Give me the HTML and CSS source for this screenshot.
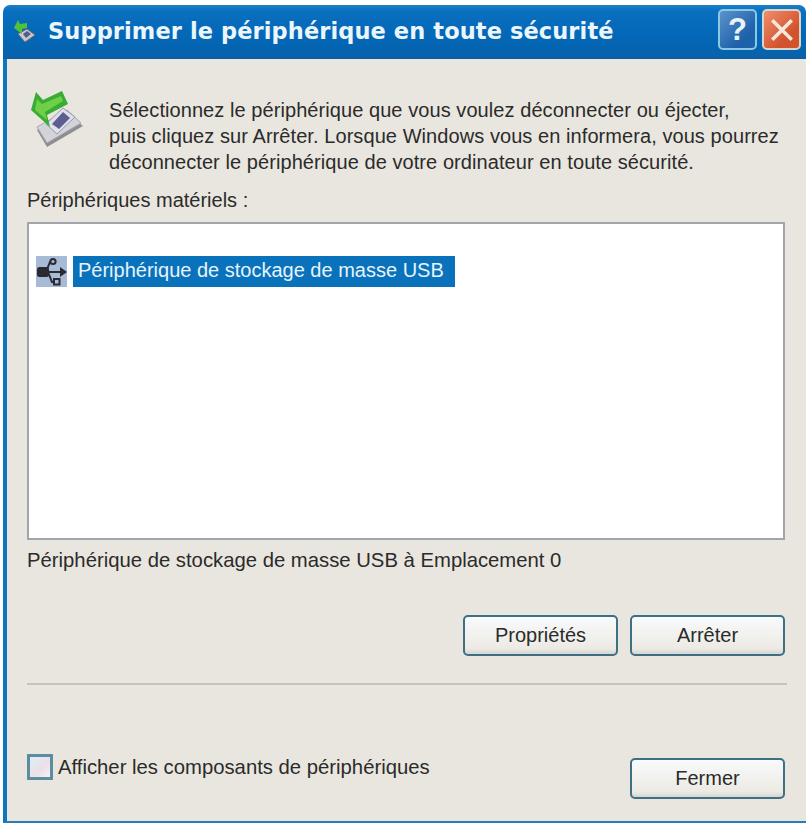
FILE: index.html
```html
<!DOCTYPE html>
<html lang="fr">
<head>
<meta charset="utf-8">
<title>Supprimer le périphérique en toute sécurité</title>
<link rel="stylesheet" href="styles.css">
</head>
<body>
<div class="window">
  <header class="titlebar">
    <svg class="title-icon" viewBox="0 0 24 24" width="24" height="24">
      <path d="M6 15 L15 10 L23 16 L13 23 Z" fill="#c9c9d2" stroke="#77706a"/>
      <path d="M11 15 L15 12 L19 15 L14 19 Z" fill="#5a5a8c"/>
      <path d="M2 9 L6 1 L8 5 L15 4 L15 9 L10 10 L10 15 Z" fill="#4fc23a"/>
    </svg>
    <h1 class="title">Supprimer le périphérique en toute sécurité</h1>
    <div class="caption-btns">
      <div class="cap-btn help">?</div>
      <div class="cap-btn close">
        <svg viewBox="0 0 24 24" width="26" height="26"><path d="M3 3 L21 21 M21 3 L3 21" stroke="#f6e8de" stroke-width="3.2" fill="none"/></svg>
      </div>
    </div>
  </header>
  <main class="body">
    <section class="intro">
      <svg class="intro-icon" viewBox="30 88 54 60" width="54" height="60">
        <path d="M37 130 L67 113 L83 126 L47 147 Z" fill="#8e8e92"/>
        <path d="M37 127 L67 110 L81 123 L47 143 Z" fill="#d3d4da" stroke="#a8a8ac"/>
        <path d="M46 124 L63 108 L75 117 L57 134 Z" fill="#dfe0e8" stroke="#9a9aa4"/>
        <path d="M52 124 L63 112 L70 118 L59 129 Z" fill="#5d5d94"/>
        <path d="M36 92 L31 110 L50 127 L47 115 L68 104 L62 91 L43 100 Z" fill="#38ac33"/>
        <path d="M37 99 L35 110 L47 120 L45 112 L63 101 L61 96 L42 104 Z" fill="#6fcf48"/>
      </svg>
      <p class="intro-text">Sélectionnez le périphérique que vous voulez déconnecter ou éjecter,<br>puis cliquez sur Arrêter. Lorsque Windows vous en informera, vous pourrez<br>déconnecter le périphérique de votre ordinateur en toute sécurité.</p>
    </section>
    <p class="list-label">Périphériques matériels :</p>
    <div class="listbox">
      <div class="list-row">
        <span class="usb-icon">
          <svg viewBox="0 0 30 30" width="30" height="30">
            <g fill="none" stroke="#2a2a30" stroke-width="2">
              <path d="M5 15 H26"/>
              <path d="M9 15 L13 5 H14"/>
              <path d="M11 15 L15 25 H17"/>
              <circle cx="16" cy="4.5" r="2.6"/>
              <rect x="17" y="22" width="5.5" height="5.5"/>
            </g>
            <rect x="0" y="10" width="12" height="10" rx="2.5" fill="#2a2a30"/>
            <path d="M23 10 L30 15 L23 20 Z" fill="#2a2a30"/>
          </svg>
        </span>
        <span class="list-item">Périphérique de stockage de masse USB</span>
      </div>
    </div>
    <p class="status">Périphérique de stockage de masse USB à Emplacement 0</p>
    <div class="actions">
      <button class="btn" type="button">Propriétés</button>
      <button class="btn" type="button">Arrêter</button>
    </div>
    <hr class="sep">
    <footer class="footer">
      <label class="check"><span class="box"></span>Afficher les composants de périphériques</label>
      <button class="btn" type="button">Fermer</button>
    </footer>
  </main>
</div>
</body>
</html>
```
FILE: styles.css
```css
* { box-sizing: border-box; }
html, body { margin: 0; padding: 0; background: #fff; }
body { width: 806px; height: 823px; overflow: hidden; padding: 5px 0 0 3px; font-family: "Liberation Sans", Arial, sans-serif; color: #2b2b2b; }
.window { width: 803px; height: 818px; display: flex; flex-direction: column; border-radius: 7px 7px 0 0; overflow: hidden; }
.titlebar { height: 54px; flex: none; display: flex; align-items: center; padding: 0 5px 0 9px; background: linear-gradient(#1a80c8 0, #0b6fbf 12%, #0468b8 55%, #0464b0 85%, #0a63a8 100%); border-bottom: 2px solid #0b5ea6; }
.title-icon { flex: none; margin-right: 12px; }
.title { margin: 0; flex: 1; font-family: "DejaVu Sans", Verdana, sans-serif; font-size: 22.5px; font-weight: 700; color: #eaf6fb; letter-spacing: 0.1px; white-space: nowrap; }
.caption-btns { display: flex; gap: 5px; margin-top: -3px; }
.cap-btn { width: 39px; height: 41px; border-radius: 5px; border: 2px solid #bcdcec; display: flex; align-items: center; justify-content: center; }
.help { background: linear-gradient(135deg, #5d93cb, #1e62ab 70%); color: #e9f3f8; font: 700 31px "Liberation Sans", sans-serif; border-color: #8cc8e4; }
.close { background: linear-gradient(135deg, #ef8f6c, #d2522c 70%); border-color: #d8d5cc; }
.body { flex: 1; min-height: 0; background: #e9e6df; border-left: 4px solid #0e76be; border-bottom: 2px solid #2a7cb8; display: flex; flex-direction: column; padding: 0 18px 0 20px; }
.intro { display: flex; height: 129px; padding-top: 29px; flex: none; }
.intro-icon { flex: none; margin: 0 25px 0 3px; }
.intro-text { margin: 9px 0 0; font-size: 20px; line-height: 26px; letter-spacing: 0.07px; white-space: nowrap; }
.list-label { margin: 0; font-size: 20px; line-height: 24px; height: 34px; flex: none; }
.listbox { height: 318px; width: 758px; background: #fff; border: 2px solid #a2a6ac; padding-top: 32px; padding-left: 7px; flex: none; }
.list-row { display: flex; align-items: center; gap: 6px; height: 31px; }
.usb-icon { width: 31px; height: 31px; background: #a7bad6; display: flex; align-items: center; justify-content: center; flex: none; }
.list-item { background: #0a72bb; color: #e6f4fb; font-size: 20px; height: 31px; line-height: 29px; padding: 0 11px 0 5px; white-space: nowrap; }
.status { margin: 8px 0 0; font-size: 20.3px; line-height: 24px; height: 24px; flex: none; }
.actions { display: flex; justify-content: flex-end; gap: 12px; margin: 43px 3px 0 0; flex: none; }
.btn { width: 155px; height: 41px; border: 2px solid #3f6e85; border-radius: 5px; background: linear-gradient(#f8fbfc, #eceae3 85%, #d6d7d2); font-family: "Liberation Sans", sans-serif; font-size: 20px; color: #2b2b2b; padding: 0; }
.sep { border: 0; height: 2px; background: #c8c4b8; margin: 27px 0 0 0; width: 760px; flex: none; }
.footer { display: flex; justify-content: space-between; align-items: flex-start; margin: 73px 3px 0 0; flex: none; }
.check { display: flex; align-items: center; font-size: 20.3px; line-height: 24px; margin-top: -4px; }
.box { width: 26px; height: 26px; border: 3px solid #5c8ca0; background: linear-gradient(135deg, #dfeef4, #ecdfe8 60%, #f4f4f0); margin-right: 5px; flex: none; }
```
